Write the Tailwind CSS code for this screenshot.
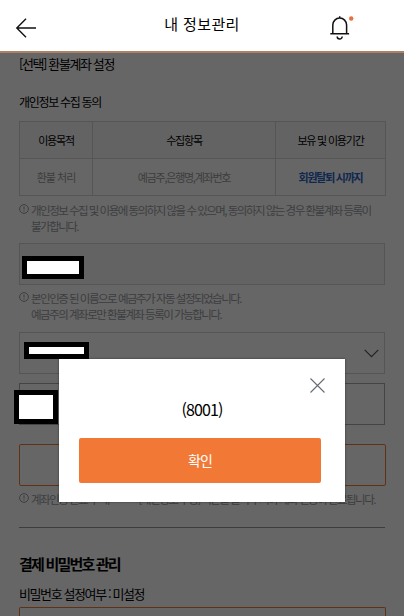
<!DOCTYPE html>
<html lang="ko">
  <head>
    <meta charset="UTF-8" />
    <meta name="viewport" content="width=device-width, initial-scale=1.0" />
    <title>내 정보관리</title>
    <script src="https://cdn.jsdelivr.net/npm/@tailwindcss/browser@4"></script>
  </head>

  <body
    class="relative h-[616px] overflow-hidden bg-white font-['Noto_Sans_CJK_KR',sans-serif] text-black"
  >
    <!-- Header -->
    <header
      class="flex h-[53px] items-center justify-between border-b-2 border-[#ad8263] bg-white pl-[15px] pr-[50px]"
    >
      <button class="mt-[5px]" aria-label="뒤로">
        <svg width="22" height="20" viewBox="0 0 22 20" fill="none" stroke="#111" stroke-width="1.4">
          <path d="M21 10H1.8M11 0.8L1.8 10l9.2 9.2" />
        </svg>
      </button>
      <h1 class="-mt-[3px] ml-[37px] text-[15px] font-normal tracking-[0.4px]">내 정보관리</h1>
      <button class="mt-[5px]" aria-label="알림">
        <svg width="24" height="26" viewBox="0 0 24 26" fill="none" stroke="#111" stroke-width="1.5">
          <path d="M2.8 18.5V10a6.9 6.9 0 0 1 13.8 0v8.5M0.3 18.7h18.8M9.7 1.2v2" />
          <path d="M7.2 21.5a2.5 2.5 0 0 0 5 0" />
          <circle cx="21.2" cy="3.5" r="2.2" fill="#e2733f" stroke="none" />
        </svg>
      </button>
    </header>

    <!-- Page content -->
    <main class="h-[563px] overflow-hidden px-[19px]">
      <h2 class="h-[22px] text-[13px] leading-[22px] tracking-[-1.4px]">[선택] 환불계좌 설정</h2>
      <h3 class="mt-[17px] h-[20px] text-[12px] leading-[20px] tracking-[-1.3px]">개인정보 수집 동의</h3>

      <div
        class="mt-[9px] grid h-[75px] w-[367px] grid-cols-[72px_182px_109px] grid-rows-2 gap-px border border-[#d5d5d5] bg-[#d5d5d5] text-center text-[11px] leading-[36px]"
      >
        <div class="bg-[#f8f8f8] tracking-[-1.2px]">이용목적</div>
        <div class="bg-[#f8f8f8] tracking-[-1.2px]">수집항목</div>
        <div class="bg-[#f8f8f8] tracking-[-1.2px]">보유 및 이용기간</div>
        <div class="bg-white tracking-[-1px] text-[#999]">환불 처리</div>
        <div class="bg-white tracking-[-1.25px] text-[#999]">예금주,은행명,계좌번호</div>
        <div class="bg-white font-bold tracking-[-1.25px] text-[#2a62c4]">회원탈퇴 시까지</div>
      </div>

      <div class="mt-[6px] flex h-[32px] text-[11.5px] leading-[16px] tracking-[-1.51px] text-[#999ba0]">
        <svg class="mt-[2px] mr-[2px] shrink-0" width="10" height="10" viewBox="0 0 10 10" fill="none" stroke="#999ba0">
          <circle cx="5" cy="5" r="4.4" />
          <path d="M5 2.3v3.4M5 6.6v1.2" />
        </svg>
        <p class="whitespace-nowrap">
          개인정보 수집 및 이용에 동의하지 않을 수 있으며, 동의하지 않는 경우 환불계좌 등록이<br />불가합니다.
        </p>
      </div>

      <div class="mt-[9px] h-[42px] w-[366px] border border-[#d5d5d5] bg-[#f8f8f8]"></div>

      <div class="mt-[5px] flex h-[32px] text-[11.5px] leading-[16px] tracking-[-1.5px] text-[#999ba0]">
        <svg class="mt-[2px] mr-[2px] shrink-0" width="10" height="10" viewBox="0 0 10 10" fill="none" stroke="#999ba0">
          <circle cx="5" cy="5" r="4.4" />
          <path d="M5 2.3v3.4M5 6.6v1.2" />
        </svg>
        <p class="whitespace-nowrap">
          본인인증 된 이름으로 예금주가 자동 설정되었습니다.<br />예금주의 계좌로만 환불계좌 등록이 가능합니다.
        </p>
      </div>

      <div class="mt-[10px] flex h-[42px] w-[366px] items-center justify-end border border-[#d5d5d5] pr-[5px]">
        <svg width="15" height="9" viewBox="0 0 15 9" fill="none" stroke="#555" stroke-width="1.2">
          <path d="M0.7 0.8L7.5 7.6L14.3 0.8" />
        </svg>
      </div>
      <div class="mt-[9px] h-[42px] w-[366px] border border-[#aaa]"></div>
      <div class="mt-[19px] h-[42px] w-[367px] rounded-[2px] border border-[#f37b35]"></div>

      <div class="mt-[5px] flex h-[16px] text-[11.5px] leading-[16px] tracking-[-1.5px] text-[#999ba0]">
        <svg class="mt-[2px] mr-[2px] shrink-0" width="10" height="10" viewBox="0 0 10 10" fill="none" stroke="#999ba0">
          <circle cx="5" cy="5" r="4.4" />
          <path d="M5 2.3v3.4M5 6.6v1.2" />
        </svg>
        <p class="flex w-[344px] justify-between whitespace-nowrap">
          <span>계좌인증 완료 후 내</span>
          <span>[개인정보 수정] 버튼을 눌러 주셔야 계좌 인증이 완료됩니다.</span>
        </p>
      </div>

      <hr class="mt-[20px] w-[366px] border-[#999]" />

      <h2 class="mt-[25px] h-[22px] text-[15px] font-bold leading-[22px] tracking-[-1.8px]">결제 비밀번호 관리</h2>
      <p class="mt-[9px] h-[20px] text-[13px] leading-[20px] tracking-[-1.4px]">비밀번호 설정여부 : 미설정</p>
      <div class="mt-[3px] h-[9px] w-[367px] rounded-t-[2px] border border-b-0 border-[#f37b35]"></div>
    </main>

    <!-- Dim layer -->
    <div class="absolute inset-x-0 top-[53px] bottom-0 bg-black/60"></div>

    <!-- Masked values -->
    <div class="absolute top-[256px] left-[22px] h-[23px] w-[62px] border-5 border-black bg-white"></div>
    <div class="absolute top-[342px] left-[24px] h-[17px] w-[65px] border-5 border-black bg-white"></div>
    <div class="absolute top-[390px] left-[14px] h-[34px] w-[44px] border-5 border-black bg-white"></div>

    <!-- Alert popup -->
    <div
      class="absolute top-[359px] left-[59px] flex h-[143px] w-[286px] flex-col bg-white px-5 pt-[19px] shadow-[0_0_2px_rgba(0,0,0,0.5)]"
    >
      <button class="self-end" aria-label="닫기">
        <svg width="15" height="15" viewBox="0 0 15 15" fill="none" stroke="#666b73" stroke-width="1.1">
          <path d="M0.5 0.5l14 14M14.5 0.5l-14 14" />
        </svg>
      </button>
      <p class="mt-[5px] h-[24px] text-center text-[16px] leading-[22px] tracking-[-0.9px]">(8001)</p>
      <button class="mt-[16px] h-[45px] w-[242px] rounded-[2px] bg-[#f27935] text-[14px] tracking-[-0.9px] text-white">
        확인
      </button>
    </div>
  </body>
</html>
